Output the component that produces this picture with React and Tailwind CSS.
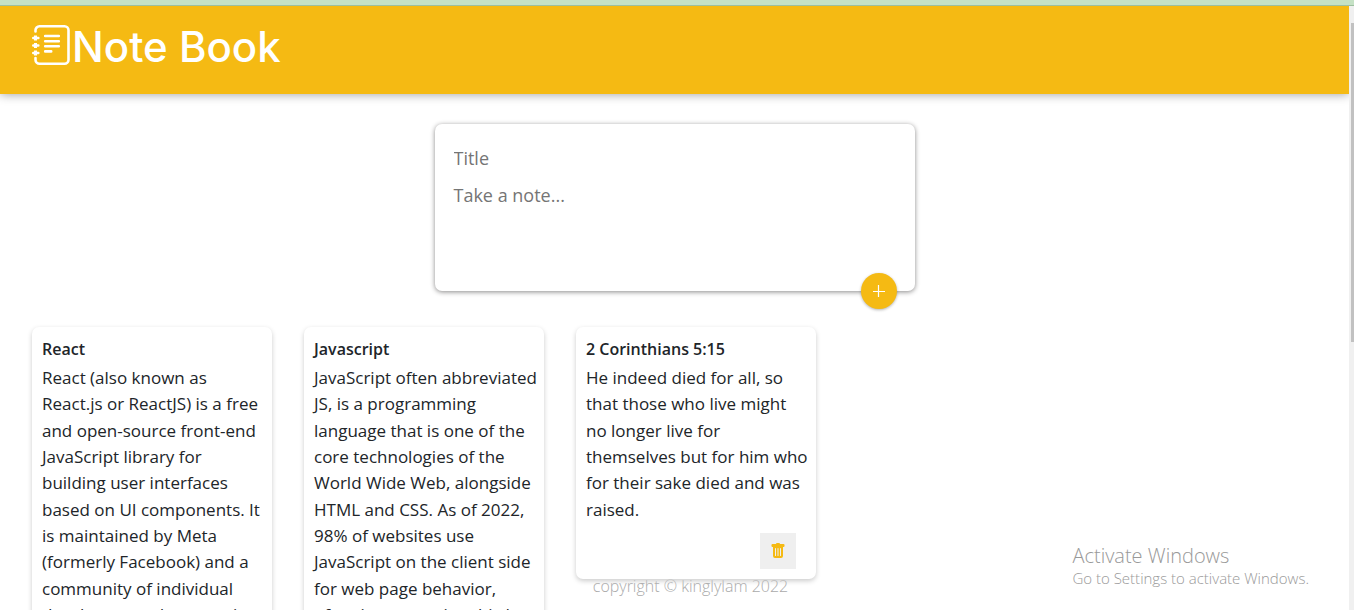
import { BsTrashFill } from "react-icons/bs";

const notes = [
  {
    title: "React",
    content: `React (also known as
React.js or ReactJS) is a free
and open-source front-end
JavaScript library for
building user interfaces
based on UI components. It
is maintained by Meta
(formerly Facebook) and a
community of individual
developers and companies.`,
  },
  {
    title: "Javascript",
    content: `JavaScript often abbreviated
JS, is a programming
language that is one of the
core technologies of the
World Wide Web, alongside
HTML and CSS. As of 2022,
98% of websites use
JavaScript on the client side
for web page behavior,
often incorporating third-party
libraries.`,
  },
  {
    title: "2 Corinthians 5:15",
    content: `He indeed died for all, so
that those who live might
no longer live for
themselves but for him who
for their sake died and was
raised.`,
  },
];

function NotebookIcon() {
  return (
    <svg
      className="size-10 shrink-0"
      viewBox="0 0 40 40"
      fill="none"
      stroke="currentColor"
      strokeLinecap="round"
      aria-hidden="true"
    >
      <path
        strokeWidth="2.6"
        d="M3.5 6.5V5.3a4 4 0 0 1 4-4h25a4 4 0 0 1 4 4v29.4a4 4 0 0 1-4 4h-25a4 4 0 0 1-4-4V33"
      />
      <path strokeWidth="2.4" d="M1.2 13h5.2M1.2 20.5h5.2M1.2 28h5.2" />
      <path strokeWidth="3" strokeLinecap="butt" d="M3.5 10.5v5M3.5 18v5M3.5 25.5v5" />
      <path strokeWidth="2.6" d="M13.2 11h13.6M13.2 16.2h13.6M13.2 21.3h13.6M13.2 26.4h6" />
    </svg>
  );
}

function Header() {
  return (
    <header className="flex h-22 shrink-0 items-start bg-[#f5ba13] px-8 pt-[19px] text-white shadow-[0_0_10px_0_rgba(0,0,0,0.4)]">
      <NotebookIcon />
      <h1 className="font-['Inter',sans-serif] text-[42px] leading-[44px] font-medium">
        Note Book
      </h1>
    </header>
  );
}

function CreateArea() {
  return (
    <form
      className="relative mx-auto mt-[30px] w-[480px] max-w-full rounded-[7px] bg-white px-[15px] pt-4 pb-[11px] shadow-[0_1px_5px_rgb(138,137,137)]"
      onSubmit={(e) => e.preventDefault()}
    >
      <input
        aria-label="Title"
        placeholder="Title"
        className="block h-9 w-full px-1 text-[18px] outline-none placeholder:text-[#757575]"
      />
      <textarea
        aria-label="Note"
        placeholder="Take a note..."
        rows={3}
        className="block h-26 w-full resize-none px-1 pt-1.5 text-[18px] leading-[26px] outline-none placeholder:text-[#757575]"
      />
      <button
        type="submit"
        aria-label="Add"
        className="absolute right-[18px] -bottom-[18px] flex size-9 items-center justify-center rounded-full bg-[#f5ba13] text-white shadow-[0_1px_3px_rgba(0,0,0,0.3)]"
      >
        <svg className="size-3" viewBox="0 0 12 12" stroke="currentColor" strokeWidth="1.2" aria-hidden="true">
          <path d="M5.5 0v12M0 6.5h12" />
        </svg>
      </button>
    </form>
  );
}

function Note({ title, content }) {
  return (
    <article className="w-[240px] rounded-[7px] bg-white p-2.5 shadow-[0_2px_5px_#ccc]">
      <h2 className="mb-1 text-[16px] leading-6 font-semibold">{title}</h2>
      <p className="mb-2.5 text-[17px] leading-[1.55] whitespace-pre">{content}</p>
      <div className="flex justify-end pr-2.5">
        <button
          type="button"
          aria-label={"Delete " + title}
          className="flex size-9 items-center justify-center bg-[#efefef] text-[#f5ba13]"
        >
          <BsTrashFill className="size-4" />
        </button>
      </div>
    </article>
  );
}

export default function App() {
  return (
    <div className="relative flex h-screen flex-col overflow-hidden bg-white font-['Open_Sans','Noto_Sans',sans-serif] text-[#212529]">
      <div className="relative z-10 h-1.5 shrink-0 border-b border-[#9cbf9f] bg-[#c5e1c5]" />
      <div className="flex min-h-0 flex-1">
        <div className="relative flex min-w-0 flex-1 flex-col">
          <Header />
          <main className="min-h-0 flex-1 overflow-hidden">
            <CreateArea />
            <section className="relative z-10 mt-9 flex flex-wrap items-start gap-8 px-8">
              {notes.map((note) => (
                <Note key={note.title} {...note} />
              ))}
            </section>
          </main>
          <footer className="absolute bottom-3 left-8 w-[1317px] text-center text-[16px] leading-6 font-light text-[#aaa]">
            copyright © kinglylam 2022
          </footer>
        </div>
        <div className="relative z-10 w-[5px] shrink-0 bg-[#f0f0f0] pt-[17px] pl-0.5">
          <div className="h-[319px] bg-[#c1c1c1]" />
        </div>
      </div>
      <aside className="absolute right-[45px] bottom-[22px] font-light text-[#999]">
        <p className="text-[20px] leading-6">Activate Windows</p>
        <p className="text-[15px] leading-5">Go to Settings to activate Windows.</p>
      </aside>
    </div>
  );
}
